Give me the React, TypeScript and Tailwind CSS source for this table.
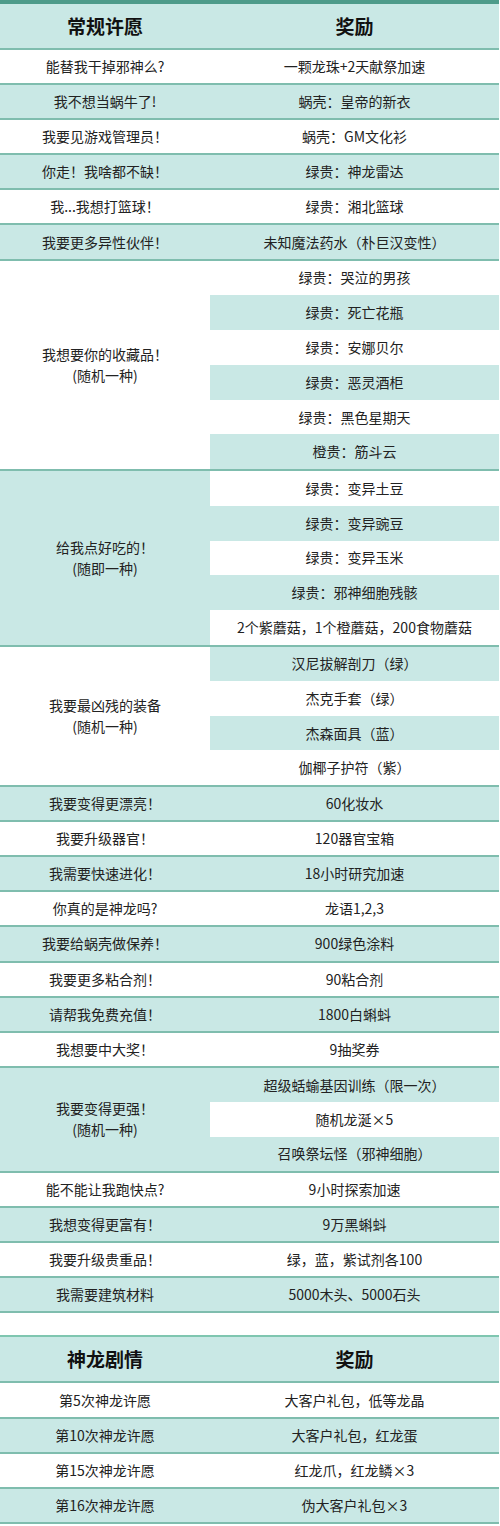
import React from "react";

type Group = { left: string[]; right: string[] };

const ROW = 35.1;

const table1: Group[] = [
  { left: ["能替我干掉邪神么?"], right: ["一颗龙珠+2天献祭加速"] },
  { left: ["我不想当蜗牛了!"], right: ["蜗壳：皇帝的新衣"] },
  { left: ["我要见游戏管理员！"], right: ["蜗壳：GM文化衫"] },
  { left: ["你走！我啥都不缺！"], right: ["绿贵：神龙雷达"] },
  { left: ["我...我想打篮球！"], right: ["绿贵：湘北篮球"] },
  { left: ["我要更多异性伙伴！"], right: ["未知魔法药水（朴巨汉变性）"] },
  {
    left: ["我想要你的收藏品！", "(随机一种)"],
    right: [
      "绿贵：哭泣的男孩",
      "绿贵：死亡花瓶",
      "绿贵：安娜贝尔",
      "绿贵：恶灵酒柜",
      "绿贵：黑色星期天",
      "橙贵：筋斗云",
    ],
  },
  {
    left: ["给我点好吃的！", "(随即一种)"],
    right: [
      "绿贵：变异土豆",
      "绿贵：变异豌豆",
      "绿贵：变异玉米",
      "绿贵：邪神细胞残骸",
      "2个紫蘑菇，1个橙蘑菇，200食物蘑菇",
    ],
  },
  {
    left: ["我要最凶残的装备", "(随机一种)"],
    right: ["汉尼拔解剖刀（绿）", "杰克手套（绿）", "杰森面具（蓝）", "伽椰子护符（紫）"],
  },
  { left: ["我要变得更漂亮！"], right: ["60化妆水"] },
  { left: ["我要升级器官！"], right: ["120器官宝箱"] },
  { left: ["我需要快速进化！"], right: ["18小时研究加速"] },
  { left: ["你真的是神龙吗?"], right: ["龙语1,2,3"] },
  { left: ["我要给蜗壳做保养！"], right: ["900绿色涂料"] },
  { left: ["我要更多粘合剂！"], right: ["90粘合剂"] },
  { left: ["请帮我免费充值！"], right: ["1800白蝌蚪"] },
  { left: ["我想要中大奖！"], right: ["9抽奖券"] },
  {
    left: ["我要变得更强！", "(随机一种)"],
    right: ["超级蛞蝓基因训练（限一次）", "随机龙涎×5", "召唤祭坛怪（邪神细胞）"],
  },
  { left: ["能不能让我跑快点?"], right: ["9小时探索加速"] },
  { left: ["我想变得更富有！"], right: ["9万黑蝌蚪"] },
  { left: ["我要升级贵重品！"], right: ["绿，蓝，紫试剂各100"] },
  { left: ["我需要建筑材料"], right: ["5000木头、5000石头"] },
];

const table2: Group[] = [
  { left: ["第5次神龙许愿"], right: ["大客户礼包，低等龙晶"] },
  { left: ["第10次神龙许愿"], right: ["大客户礼包，红龙蛋"] },
  { left: ["第15次神龙许愿"], right: ["红龙爪，红龙鳞×3"] },
  { left: ["第16次神龙许愿"], right: ["伪大客户礼包×3"] },
];

const TEAL = "bg-[#c9e8e5]";
const WHITE = "bg-white";

function Rows({ groups }: { groups: Group[] }) {
  let rowIndex = 0;
  return (
    <div>
      {groups.map((g, gi) => {
        const startRow = rowIndex;
        rowIndex += g.right.length;
        return (
          <div
            key={gi}
            className="flex border-b-2 border-[#7fbdae]"
            style={{ height: g.right.length * ROW }}
          >
            <div
              className={`w-[210px] shrink-0 flex flex-col items-center justify-center leading-[21px] ${
                gi % 2 === 0 ? WHITE : TEAL
              }`}
            >
              {g.left.map((l, li) => (
                <div key={li}>{l}</div>
              ))}
            </div>
            <div className="flex-1 flex flex-col">
              {g.right.map((r, ri) => (
                <div
                  key={ri}
                  className={`flex-1 flex items-center justify-center ${
                    (startRow + ri) % 2 === 0 ? WHITE : TEAL
                  }`}
                >
                  {r}
                </div>
              ))}
            </div>
          </div>
        );
      })}
    </div>
  );
}

function Header({ a, b }: { a: string; b: string }) {
  return (
    <div className={`flex h-[46px] ${TEAL} border-b-2 border-[#7fbdae] text-[19px] font-bold text-[#111]`}>
      <div className="w-[210px] shrink-0 flex items-center justify-center">{a}</div>
      <div className="flex-1 flex items-center justify-center">{b}</div>
    </div>
  );
}

export default function App() {
  return (
    <div
      className="w-[500px] h-[1526px] bg-white text-[14px] text-[#222] overflow-hidden"
      style={{ fontFamily: '"Noto Sans CJK SC", "Noto Sans", sans-serif' }}
    >
      <div className="w-[499px]">
        <div className="h-[4px] bg-[#4e9b8a]" />
        <Header a="常规许愿" b="奖励" />
        <Rows groups={table1} />
        <div className="h-[22px]" />
        <div className="border-t-2 border-[#7fc6b0]">
          <Header a="神龙剧情" b="奖励" />
          <Rows groups={table2} />
        </div>
      </div>
    </div>
  );
}
